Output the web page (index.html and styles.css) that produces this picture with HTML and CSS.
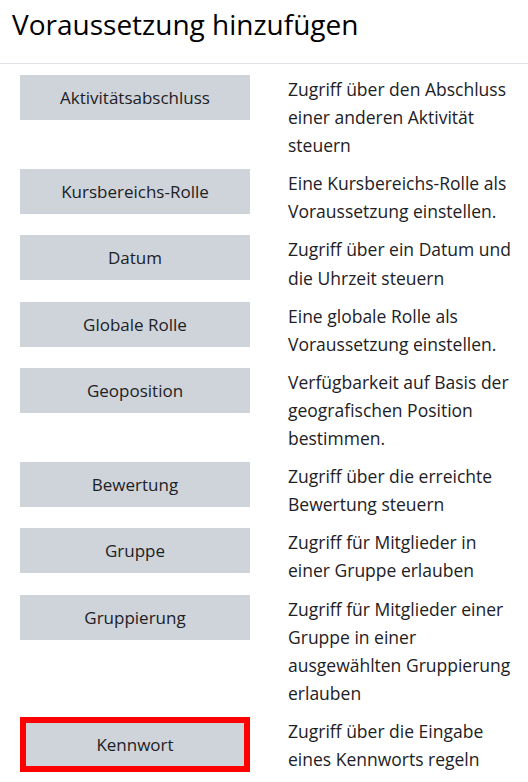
FILE: index.html
```html
<!DOCTYPE html>
<html lang="de">
<head>
<meta charset="utf-8">
<title>Voraussetzung hinzufügen</title>
<link rel="stylesheet" href="styles.css">
</head>
<body>
<div class="dialog">
  <div class="header">
    <h2 class="title">Voraussetzung hinzufügen</h2>
  </div>
  <div class="body">
    <div class="row">
      <div class="btn-col"><button class="btn">Aktivitätsabschluss</button></div>
      <div class="desc">Zugriff über den Abschluss einer anderen Aktivität steuern</div>
    </div>
    <div class="row">
      <div class="btn-col"><button class="btn">Kursbereichs-Rolle</button></div>
      <div class="desc">Eine Kursbereichs-Rolle als Voraussetzung einstellen.</div>
    </div>
    <div class="row">
      <div class="btn-col"><button class="btn">Datum</button></div>
      <div class="desc">Zugriff über ein Datum und die Uhrzeit steuern</div>
    </div>
    <div class="row">
      <div class="btn-col"><button class="btn">Globale Rolle</button></div>
      <div class="desc">Eine globale Rolle als Voraussetzung einstellen.</div>
    </div>
    <div class="row">
      <div class="btn-col"><button class="btn">Geoposition</button></div>
      <div class="desc">Verfügbarkeit auf Basis der geografischen Position bestimmen.</div>
    </div>
    <div class="row">
      <div class="btn-col"><button class="btn">Bewertung</button></div>
      <div class="desc">Zugriff über die erreichte Bewertung steuern</div>
    </div>
    <div class="row">
      <div class="btn-col"><button class="btn">Gruppe</button></div>
      <div class="desc">Zugriff für Mitglieder in einer Gruppe erlauben</div>
    </div>
    <div class="row">
      <div class="btn-col"><button class="btn">Gruppierung</button></div>
      <div class="desc">Zugriff für Mitglieder einer Gruppe in einer ausgewählten Gruppierung erlauben</div>
    </div>
    <div class="row">
      <div class="btn-col"><button class="btn btn-marked">Kennwort</button></div>
      <div class="desc">Zugriff über die Eingabe eines Kennworts regeln</div>
    </div>
  </div>
</div>
</body>
</html>
```
FILE: styles.css
```css
html, body {
  margin: 0;
  padding: 0;
  background: #fff;
}
body {
  font-family: "Open Sans", "Noto Sans", sans-serif;
  color: #1d2125;
  font-size: 17.5px;
  line-height: 28.1px;
  overflow: hidden;
}
.header {
  height: 64px;
  border-bottom: 1px solid #dee2e6;
  padding: 0 12px;
  box-sizing: border-box;
}
.title {
  margin: 0;
  padding-top: 4px;
  font-weight: 400;
  font-size: 28px;
  line-height: 40px;
  color: #000;
}
.body {
  padding: 11px 0 0 20px;
}
.row {
  display: flex;
  gap: 38px;
  margin-bottom: 10px;
}
.btn-col {
  width: 230px;
  flex: none;
}
.btn {
  display: block;
  width: 100%;
  height: 45px;
  background: #ced4da;
  border: 1px solid #ced4da;
  font-family: inherit;
  font-size: 17px;
  color: #1d2125;
  padding: 0 12px;
  margin: 0;
}
.btn-marked {
  height: 55px;
  border: 6px solid #ff0000;
}
.desc {
  width: 228px;
  flex: none;
}
```
